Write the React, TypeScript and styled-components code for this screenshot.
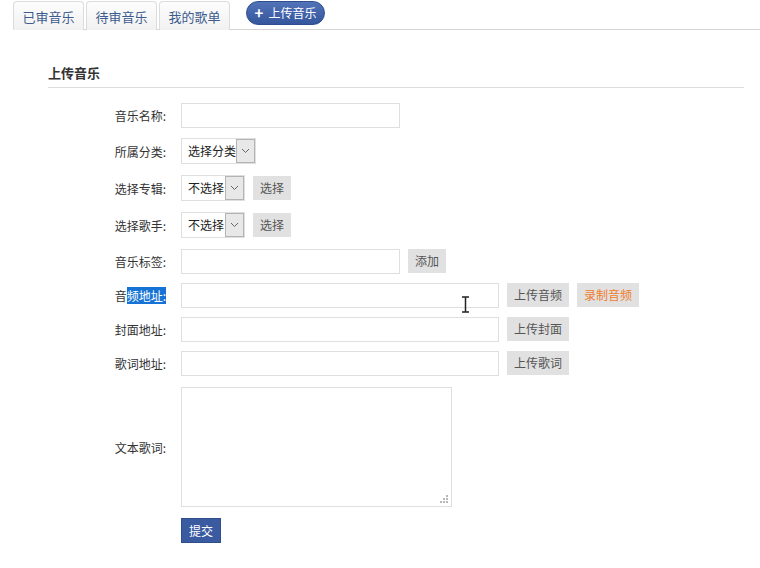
import React from 'react';
import styled, { createGlobalStyle } from 'styled-components';

const GlobalStyle = createGlobalStyle`
    body {
        margin: 0;
        background: #fff;
        font-family: "Noto Sans CJK SC", "Liberation Sans", sans-serif;
        font-size: 12px;
        color: #333;
    }
`;

const Page = styled.div`
    width: 760px;
    height: 568px;
    position: relative;
    overflow: hidden;
`;

const TabBar = styled.div`
    display: flex;
    align-items: flex-start;
    gap: 2px;
    margin: 1px 0 0 13px;
    height: 28px;
    border-bottom: 1px solid #d4d4d4;
`;

const Tab = styled.div`
    box-sizing: border-box;
    width: 71px;
    height: 29px;
    border: 1px solid #dcdcdc;
    border-bottom: none;
    border-radius: 4px 4px 0 0;
    background: linear-gradient(#fdfdfd, #f1f1f1);
    color: #3d5c8f;
    font-size: 13px;
    line-height: 30px;
    text-align: center;
`;

const UploadButton = styled.div`
    margin-left: 14px;
    box-sizing: border-box;
    width: 79px;
    height: 24px;
    border-radius: 12px;
    background: linear-gradient(#5373b8, #34569c);
    border: 1px solid #2e4d8e;
    color: #fff;
    font-size: 12px;
    line-height: 22px;
    display: flex;
    align-items: center;
    justify-content: center;
    gap: 5px;
`;

const Plus = styled.span`
    font-size: 15px;
    font-weight: bold;
    line-height: 1;
    margin-top: -2px;
`;

const Content = styled.div`
    margin: 0 16px 0 48px;
`;

const Heading = styled.div`
    margin-top: 34px;
    padding-bottom: 5px;
    border-bottom: 1px solid #dddddd;
    font-size: 13px;
    font-weight: bold;
    color: #333;
    line-height: 18px;
`;

const Form = styled.div`
    display: flex;
    flex-direction: column;
    margin-top: 14px;
`;

const Row = styled.div<{ $h: number; $gap: number }>`
    display: flex;
    align-items: center;
    height: ${p => p.$h}px;
    margin-bottom: ${p => p.$gap}px;
`;

const Label = styled.div`
    width: 118px;
    padding-right: 15px;
    text-align: right;
    color: #333;
    font-size: 12px;
    white-space: nowrap;
`;

const Selected = styled.span`
    background: #1673d6;
    color: #fff;
`;

const Input = styled.div<{ $w: number }>`
    box-sizing: border-box;
    width: ${p => p.$w}px;
    height: 25px;
    border: 1px solid #dfdfdf;
    background: #fff;
`;

const SelectBox = styled.div<{ $w: number }>`
    box-sizing: border-box;
    width: ${p => p.$w}px;
    height: 26px;
    border: 1px solid #dfdfdf;
    background: #fff;
    display: flex;
    align-items: stretch;
`;

const SelectText = styled.span`
    flex: 1;
    padding-left: 6px;
    line-height: 24px;
    color: #222;
`;

const SelectArrow = styled.span`
    width: 17px;
    background: #e8e8e8;
    border: 1px solid #b4b4b4;
    display: flex;
    align-items: center;
    justify-content: center;
`;

const Button = styled.div<{ $orange?: boolean }>`
    box-sizing: border-box;
    height: 24px;
    padding: 0 7px;
    margin-left: 8px;
    background: #e1e1e1;
    color: ${p => (p.$orange ? '#f07c2c' : '#555')};
    line-height: 24px;
    font-size: 12px;
`;

const TextAreaWrap = styled.div`
    position: relative;
    box-sizing: border-box;
    width: 271px;
    height: 120px;
    border: 1px solid #dfdfdf;
    background: #fff;
`;

const Grip = styled.svg`
    position: absolute;
    right: 2px;
    bottom: 2px;
`;

const SubmitRow = styled.div`
    padding-left: 133px;
    margin-top: 11px;
`;

const Submit = styled.div`
    display: inline-block;
    box-sizing: border-box;
    width: 40px;
    height: 25px;
    background: #3a5b9f;
    border: 1px solid #2f4e8c;
    color: #fff;
    font-size: 12px;
    line-height: 23px;
    text-align: center;
`;

const Cursor = styled.svg`
    position: absolute;
    left: 461px;
    top: 296px;
`;

const Chevron = () => (
    <svg width="9" height="6" viewBox="0 0 9 6">
        <path d="M1 1 L4.5 4.5 L8 1" fill="none" stroke="#666" strokeWidth="1" />
    </svg>
);

const Select = ({ w, text }: { w: number; text: string }) => (
    <SelectBox $w={w}>
        <SelectText>{text}</SelectText>
        <SelectArrow><Chevron /></SelectArrow>
    </SelectBox>
);

export default function App() {
    return (
        <Page>
            <GlobalStyle />
            <TabBar>
                <Tab>已审音乐</Tab>
                <Tab>待审音乐</Tab>
                <Tab>我的歌单</Tab>
                <UploadButton><Plus>+</Plus>上传音乐</UploadButton>
            </TabBar>
            <Content>
                <Heading>上传音乐</Heading>
                <Form>
                    <Row $h={26} $gap={10}>
                        <Label>音乐名称:</Label>
                        <Input $w={219} />
                    </Row>
                    <Row $h={26} $gap={11}>
                        <Label>所属分类:</Label>
                        <Select w={75} text="选择分类" />
                    </Row>
                    <Row $h={26} $gap={11}>
                        <Label>选择专辑:</Label>
                        <Select w={64} text="不选择" />
                        <Button>选择</Button>
                    </Row>
                    <Row $h={26} $gap={10}>
                        <Label>选择歌手:</Label>
                        <Select w={64} text="不选择" />
                        <Button>选择</Button>
                    </Row>
                    <Row $h={26} $gap={8}>
                        <Label>音乐标签:</Label>
                        <Input $w={219} />
                        <Button>添加</Button>
                    </Row>
                    <Row $h={26} $gap={8}>
                        <Label>音<Selected>频地址:</Selected></Label>
                        <Input $w={318} />
                        <Button>上传音频</Button>
                        <Button $orange>录制音频</Button>
                    </Row>
                    <Row $h={26} $gap={8}>
                        <Label>封面地址:</Label>
                        <Input $w={318} />
                        <Button>上传封面</Button>
                    </Row>
                    <Row $h={26} $gap={11}>
                        <Label>歌词地址:</Label>
                        <Input $w={318} />
                        <Button>上传歌词</Button>
                    </Row>
                    <Row $h={120} $gap={0}>
                        <Label>文本歌词:</Label>
                        <TextAreaWrap>
                            <Grip width="9" height="9" viewBox="0 0 9 9">
                                <g fill="#b8b8b8">
                                    <rect x="6" y="0" width="2" height="2" />
                                    <rect x="3" y="3" width="2" height="2" />
                                    <rect x="6" y="3" width="2" height="2" />
                                    <rect x="0" y="6" width="2" height="2" />
                                    <rect x="3" y="6" width="2" height="2" />
                                    <rect x="6" y="6" width="2" height="2" />
                                </g>
                            </Grip>
                        </TextAreaWrap>
                    </Row>
                </Form>
                <SubmitRow>
                    <Submit>提交</Submit>
                </SubmitRow>
            </Content>
            <Cursor width="9" height="17" viewBox="0 0 9 17">
                <path d="M1 1 H8 M4.5 1 V16 M1 16 H8" stroke="#222" strokeWidth="1.5" fill="none" />
            </Cursor>
        </Page>
    );
}
